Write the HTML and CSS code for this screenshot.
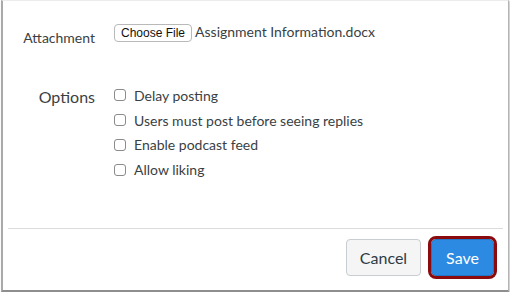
FILE: index.html
```html
<!DOCTYPE html>
<html lang="en">
<head>
    <meta charset="UTF-8">
    <title>Discussion Options</title>
    <link rel="stylesheet" href="styles.css">
</head>
<body>
    <div class="frame">
        <div class="form-row attachment-row">
            <div class="label">Attachment</div>
            <div class="control file-control">
                <span class="file-btn">Choose File</span>
                <span class="file-name">Assignment Information.docx</span>
            </div>
        </div>

        <div class="form-row options-row">
            <div class="label options-label">Options</div>
            <div class="control">
                <label class="check"><span class="box"></span>Delay posting</label>
                <label class="check"><span class="box"></span>Users must post before seeing replies</label>
                <label class="check"><span class="box"></span>Enable podcast feed</label>
                <label class="check"><span class="box"></span>Allow liking</label>
            </div>
        </div>

        <div class="footer">
            <button class="btn btn-cancel">Cancel</button>
            <button class="btn btn-save">Save</button>
        </div>
    </div>
</body>
</html>
```

FILE: styles.css
```css
body {
    margin: 0;
    background-color: #fff;
    font-family: Lato, 'Open Sans', sans-serif;
    color: #3a3f44;
}
.frame {
    box-sizing: border-box;
    width: 508px;
    height: 292px;
    margin-left: 1px;
    border-top: 1px solid #ececec;
    border-left: 2px solid #a9a9a9;
    border-right: 1px solid #b4b4b4;
    border-bottom: 2px solid #8e8e8e;
    box-shadow: 1px 1px 2px rgba(0,0,0,0.25);
    display: flex;
    flex-direction: column;
}
.form-row {
    display: grid;
    grid-template-columns: 92px 1fr;
    column-gap: 19px;
}
.label {
    text-align: right;
    font-size: 14px;
}
.attachment-row {
    padding-top: 23px;
    height: 44px;
}
.attachment-row .label {
    padding-top: 5px;
}
.file-control {
    display: flex;
    align-items: flex-start;
}
.file-btn {
    display: inline-block;
    box-sizing: border-box;
    height: 18px;
    padding: 0 6px;
    border: 1px solid #b9b9b9;
    border-radius: 4px;
    background-color: #fff;
    font-family: 'Liberation Sans', Arial, sans-serif;
    font-size: 12px;
    line-height: 16px;
    color: #111;
}
.file-name {
    margin-left: 3px;
    font-size: 14px;
    line-height: 16px;
}
.options-row {
    padding-top: 15px;
}
.options-label {
    font-size: 16px;
    padding-top: 4px;
}
.check {
    display: flex;
    align-items: center;
    height: 24.8px;
    font-size: 14px;
}
.box {
    box-sizing: border-box;
    width: 12px;
    height: 12px;
    margin-right: 8px;
    border: 1px solid #8b8b8b;
    border-radius: 3px;
    background-color: #fff;
}
.footer {
    margin-top: auto;
    margin-left: 5px;
    margin-right: 5px;
    border-top: 1px solid #dcdcdc;
    padding: 10px 9px 14px 0;
    display: flex;
    justify-content: flex-end;
    gap: 10px;
}
.btn {
    font-family: Lato, 'Open Sans', sans-serif;
    font-size: 16px;
    height: 37px;
    border-radius: 4px;
    cursor: pointer;
}
.btn-cancel {
    width: 75px;
    background-color: #f5f5f5;
    border: 1px solid #c7cdd1;
    color: #2d3b45;
}
.btn-save {
    width: 63px;
    background-color: #2d8ae2;
    border: 1px solid #2176c7;
    color: #fff;
    outline: 3px solid #8a0a0e;
    outline-offset: 0;
    border-radius: 5px;
}
```
